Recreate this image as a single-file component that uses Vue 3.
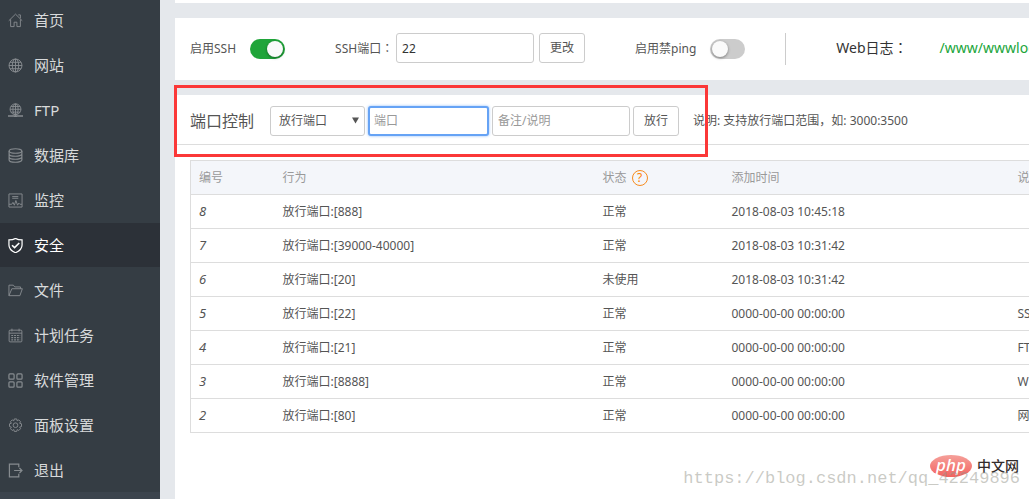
<script setup>
import { ref } from 'vue'

const menu = [
  { name: '首页', icon: 'home' },
  { name: '网站', icon: 'globe' },
  { name: 'FTP', icon: 'ftp' },
  { name: '数据库', icon: 'database' },
  { name: '监控', icon: 'monitor' },
  { name: '安全', icon: 'shield', active: true },
  { name: '文件', icon: 'folder' },
  { name: '计划任务', icon: 'calendar' },
  { name: '软件管理', icon: 'apps' },
  { name: '面板设置', icon: 'gear' },
  { name: '退出', icon: 'exit' }
]

const rows = [
  { id: 8, action: '放行端口:[888]', state: '正常', time: '2018-08-03 10:45:18', note: '' },
  { id: 7, action: '放行端口:[39000-40000]', state: '正常', time: '2018-08-03 10:31:42', note: '' },
  { id: 6, action: '放行端口:[20]', state: '未使用', time: '2018-08-03 10:31:42', note: '' },
  { id: 5, action: '放行端口:[22]', state: '正常', time: '0000-00-00 00:00:00', note: 'SSH' },
  { id: 4, action: '放行端口:[21]', state: '正常', time: '0000-00-00 00:00:00', note: 'FTP' },
  { id: 3, action: '放行端口:[8888]', state: '正常', time: '0000-00-00 00:00:00', note: 'WEB' },
  { id: 2, action: '放行端口:[80]', state: '正常', time: '0000-00-00 00:00:00', note: '网站' }
]

const sshOn = ref(true)
const pingOff = ref(false)
const sshPort = ref('22')
const port = ref('')
const remark = ref('')
</script>

<template>
  <div class="layout">
    <aside class="sidebar">
      <nav>
        <a v-for="m in menu" :key="m.name" href="#" class="item" :class="{ active: m.active }">
          <svg class="icon" viewBox="0 0 16 16" aria-hidden="true">
            <g v-if="m.icon === 'home'">
              <path d="M.8 8.3 8 1.2l7.2 7.1M2.8 6.8v7.7h3.7V9.8h3v4.7h3.7V6.8M11 2h2.2v3.6" />
            </g>
            <g v-else-if="m.icon === 'globe'">
              <circle cx="8" cy="8" r="6.9" />
              <ellipse cx="8" cy="8" rx="3.4" ry="6.9" />
              <path d="M8 1v14M1 8h14M2.2 4.6h11.6M2.2 11.4h11.6" />
            </g>
            <g v-else-if="m.icon === 'ftp'">
              <circle cx="8" cy="6.7" r="5.8" />
              <ellipse cx="8" cy="6.7" rx="2.8" ry="5.8" />
              <path d="M8 1v13M2.2 6.7h11.6M3.2 3.7h9.6M3.2 9.7h9.6" />
              <path class="heavy" d="M0 13.8h16M6.5 14.2h3" />
            </g>
            <g v-else-if="m.icon === 'database'" class="bold">
              <ellipse cx="8" cy="3.2" rx="6.8" ry="2.4" />
              <path d="M1.2 3.2v9.6c0 3.2 13.6 3.2 13.6 0V3.2M1.2 6.4c0 3.2 13.6 3.2 13.6 0M1.2 9.6c0 3.2 13.6 3.2 13.6 0" />
            </g>
            <g v-else-if="m.icon === 'monitor'">
              <path d="M1 1h14v14H1zM4.5 3.8h6.5M4.5 5.6h6.5M1 12h3l1.3-2 1.5 3L8.4 8l1.8 5 1.3-2.2 1.2 1.2H15" />
            </g>
            <g v-else-if="m.icon === 'shield'">
              <path class="bold" d="M8 .4c2 1.2 4.5 1.6 7 1.600v5.500c0 4-2.800 6.500-7 8.200-4.200-1.700-7-4.200-7-8.200V2C3.500 2 6 1.600 8 .4z" />
              <path class="heavy" d="m4.300 7.700 2.700 2.600 5-5" />
            </g>
            <g v-else-if="m.icon === 'folder'">
              <path d="M1 13.500V2.300h4.700l1.500 1.900h6.200v1.900M1 13.500h11.700l2.600-7.400H4.100L1 13.500" />
            </g>
            <g v-else-if="m.icon === 'calendar'">
              <rect x="1.200" y="2.300" width="13.600" height="12.500" rx="1" />
              <path d="M1.200 5.500h13.600M4.200.7v3M11.800.7v3" />
              <path class="dots" d="M3.500 8h9.500M3.500 10.300h9.500M3.500 12.600h9.500" />
            </g>
            <g v-else-if="m.icon === 'apps'" class="bold">
              <rect x="1" y="1" width="5.500" height="5.500" rx="1" />
              <rect x="9.500" y="1" width="5.500" height="5.500" rx="1" />
              <rect x="1" y="9.500" width="5.500" height="5.500" rx="1" />
              <rect x="9.500" y="9.500" width="5.500" height="5.500" rx="1" />
            </g>
            <g v-else-if="m.icon === 'gear'">
              <path d="M6.700 1h2.600l.5 2 1.700-1 1.900 1.900-1 1.700 2 .6v2.900l-2 .6 1 1.700-1.900 1.900-1.700-1-.5 2H6.700l-.5-2-1.700 1-1.900-1.900 1-1.700-2-.6V6.200l2-.6-1-1.700L4.500 2l1.700 1z" />
              <circle cx="8" cy="7.700" r="2.500" />
            </g>
            <g v-else class="bold">
              <path d="M11.500 4.500V1.200H1.500v13.600h10v-3.300" />
              <path d="M6.500 8h8.300M12.200 5.300 14.900 8l-2.700 2.700" />
            </g>
          </svg>
          <span>{{ m.name }}</span>
        </a>
      </nav>
    </aside>

    <main class="main">
      <section class="panel top-panel"></section>

      <section class="panel ssh">
        <label for="ssh">启用SSH</label>
        <input id="ssh" v-model="sshOn" type="checkbox" class="switch" />
        <label for="ssh-port" class="port-label">SSH端口<span class="colon">：</span></label>
        <input id="ssh-port" v-model="sshPort" type="text" class="field wide value" />
        <button type="button" class="btn change">更改</button>
        <label for="ping" class="ping-label">启用禁ping</label>
        <input id="ping" v-model="pingOff" type="checkbox" class="switch" />
        <div class="weblog">
          <span>Web日志<span class="colon">：</span></span>
          <a href="#">/www/wwwlogs</a>
        </div>
      </section>

      <section class="panel ports">
        <div class="toolbar">
          <h1>端口控制</h1>
          <div class="select-wrap">
            <select aria-label="行为">
              <option>放行端口</option>
              <option>屏蔽IP</option>
            </select>
            <svg class="caret" viewBox="0 0 8 7" aria-hidden="true"><path d="M0 0h8L4 7z" /></svg>
          </div>
          <input v-model="port" type="text" class="field port focused" placeholder="端口" aria-label="端口" />
          <input v-model="remark" type="text" class="field wide" placeholder="备注/说明" aria-label="备注/说明" />
          <button type="button" class="btn">放行</button>
          <p>说明: 支持放行端口范围，如: 3000:3500</p>
        </div>

        <div class="table-wrap">
          <table>
            <colgroup>
              <col class="c-id" /><col class="c-action" /><col class="c-state" /><col class="c-time" /><col />
            </colgroup>
            <thead>
              <tr>
                <th>编号</th>
                <th>行为</th>
                <th><span class="state-head">状态<a href="#" class="help">?</a></span></th>
                <th>添加时间</th>
                <th>说明</th>
              </tr>
            </thead>
            <tbody>
              <tr v-for="r in rows" :key="r.id">
                <td><em>{{ r.id }}</em></td>
                <td>{{ r.action }}</td>
                <td>{{ r.state }}</td>
                <td>{{ r.time }}</td>
                <td>{{ r.note }}</td>
              </tr>
            </tbody>
          </table>
        </div>
        <div class="highlight"></div>
      </section>
    </main>

    <div class="brand">
      <span class="php">php</span>
      <span class="site">中文网</span>
    </div>
    <div class="watermark">https://blog.csdn.net/qq_42249896</div>
  </div>
</template>

<style>
body {
  margin: 0;
  overflow: hidden;
}
</style>

<style scoped>
.layout {
  position: relative;
  display: flex;
  height: 100vh;
  overflow: hidden;
  background: #e5e8ec;
  color: #555;
  font: 12px/18px "Noto Sans", "Noto Sans CJK SC", sans-serif;
}
.layout * {
  box-sizing: border-box;
}
input,
select,
button {
  margin: 0;
  font: inherit;
  color: inherit;
}
em {
  font-size: 13px;
}

.sidebar {
  flex: none;
  width: 160px;
  background: #3c444d;
}
nav {
  margin-top: -2px;
  background: #353d44;
}
.item {
  display: flex;
  align-items: center;
  gap: 11px;
  height: 44px;
  margin-bottom: 1px;
  padding-left: 8px;
  color: #d8dadb;
  font-size: 15px;
  text-decoration: none;
}
.item:last-child {
  margin-bottom: 0;
}
.item.active {
  background: #2c3138;
  color: #fff;
}
.icon {
  width: 15px;
  height: 15px;
  fill: none;
  stroke: #868b8f;
  stroke-width: 1;
}
.active .icon {
  stroke: #fff;
}
.bold {
  stroke-width: 1.3;
}
.heavy {
  stroke-width: 1.7;
}
.dots {
  stroke-width: 1.3;
  stroke-dasharray: 2 1;
}

.main {
  display: flex;
  flex: 1;
  flex-direction: column;
  gap: 15px;
  min-width: 0;
  padding-left: 15px;
}
.panel {
  background: #fff;
}
.top-panel {
  flex: none;
  height: 3px;
}

.ssh {
  display: flex;
  flex: none;
  align-items: center;
  height: 62px;
  padding-left: 15px;
  white-space: nowrap;
}
.ssh > * {
  flex: none;
}
.colon {
  font-family: "Noto Sans CJK TC", sans-serif;
  line-height: 1;
}
.switch {
  appearance: none;
  display: flex;
  align-items: center;
  width: 35px;
  height: 20px;
  margin-left: 14px;
  padding: 2px;
  border-radius: 10px;
  background: #ccc;
}
.switch::before {
  content: "";
  width: 16px;
  height: 16px;
  border-radius: 50%;
  background: #fafafa;
  box-shadow: 0 1px 3px rgba(0, 0, 0, 0.4);
}
.switch:checked {
  justify-content: flex-end;
  background: #20a53a;
}
.port-label {
  width: 61px;
  margin-left: 50px;
}
.ping-label {
  margin-left: 50px;
}
.field,
.btn,
select {
  height: 30px;
  border: 1px solid #ccc;
  border-radius: 3px;
  background: #fff;
}
.ssh .field,
.ssh .btn {
  margin-bottom: 2px;
}
.field {
  flex: none;
  padding: 0 5px;
  outline: none;
}
.field::placeholder {
  color: #999;
  opacity: 1;
}
.wide {
  width: 138px;
}
.value {
  color: #333;
}
.btn {
  flex: none;
  width: 46px;
  padding: 0;
}
.change {
  margin-left: 5px;
}
.weblog {
  display: flex;
  align-items: center;
  height: 32px;
  gap: 32px;
  margin-left: 40px;
  padding: 0 0 2px 50px;
  border-left: 1px solid #ccc;
  color: #333;
  font-size: 14px;
}
.weblog a {
  color: #20a53a;
  text-decoration: none;
}

.ports {
  position: relative;
  flex: 1;
}
.toolbar {
  display: flex;
  align-items: center;
  gap: 3px;
  height: 50px;
  padding: 2px 0 0 15px;
  border-bottom: 1px solid #ddd;
  white-space: nowrap;
}
h1 {
  flex: none;
  width: 77px;
  margin: 0;
  font-size: 16px;
  font-weight: 400;
}
.select-wrap {
  position: relative;
  flex: none;
}
select {
  appearance: none;
  display: block;
  width: 95px;
  padding: 0 8px;
}
.caret {
  position: absolute;
  top: 11px;
  right: 6px;
  width: 7px;
  height: 7px;
  fill: #555;
  pointer-events: none;
}
.port {
  width: 121px;
}
.focused {
  padding: 0 4px;
  border: 2px solid #66a3f5;
  box-shadow: 0 0 3px #8fbcf8;
}
.toolbar p {
  margin: 0 0 0 11px;
}

.table-wrap {
  padding: 15px 0 0 15px;
}
table {
  width: 100%;
  min-width: 1000px;
  border: 1px solid #ddd;
  border-collapse: collapse;
  table-layout: fixed;
}
.c-id { width: 84px; }
.c-action { width: 320px; }
.c-state { width: 129px; }
.c-time { width: 286px; }
th,
td {
  height: 34px;
  padding: 0 8px;
  border-bottom: 1px solid #ddd;
  text-align: left;
  font-weight: 400;
}
th {
  background: #f4f6fa;
  color: #999;
}
.state-head {
  display: flex;
  align-items: center;
  gap: 5px;
}
.help {
  width: 16px;
  height: 16px;
  border: 1px solid #f78c1f;
  border-radius: 50%;
  color: #ff7f00;
  line-height: 14px;
  text-align: center;
  text-decoration: none;
}
.highlight {
  position: absolute;
  top: -10px;
  left: -1px;
  width: 534px;
  height: 72px;
  border: 3px solid #fb3838;
  pointer-events: none;
}

.watermark {
  position: absolute;
  right: 9px;
  bottom: 8px;
  color: rgba(150, 150, 140, 0.5);
  font: 17px/24px "Liberation Mono", monospace;
}
.brand {
  position: absolute;
  right: 10px;
  bottom: 22px;
  display: flex;
  align-items: center;
  gap: 5px;
}
.php {
  width: 42px;
  height: 22px;
  border-radius: 50%;
  background: linear-gradient(#f5a09a, #f3625f);
  color: #fff;
  font: italic 500 17px/19px "Noto Sans", sans-serif;
  text-align: center;
}
.site {
  color: #332c2b;
  font-size: 14px;
  font-weight: 500;
}
</style>
